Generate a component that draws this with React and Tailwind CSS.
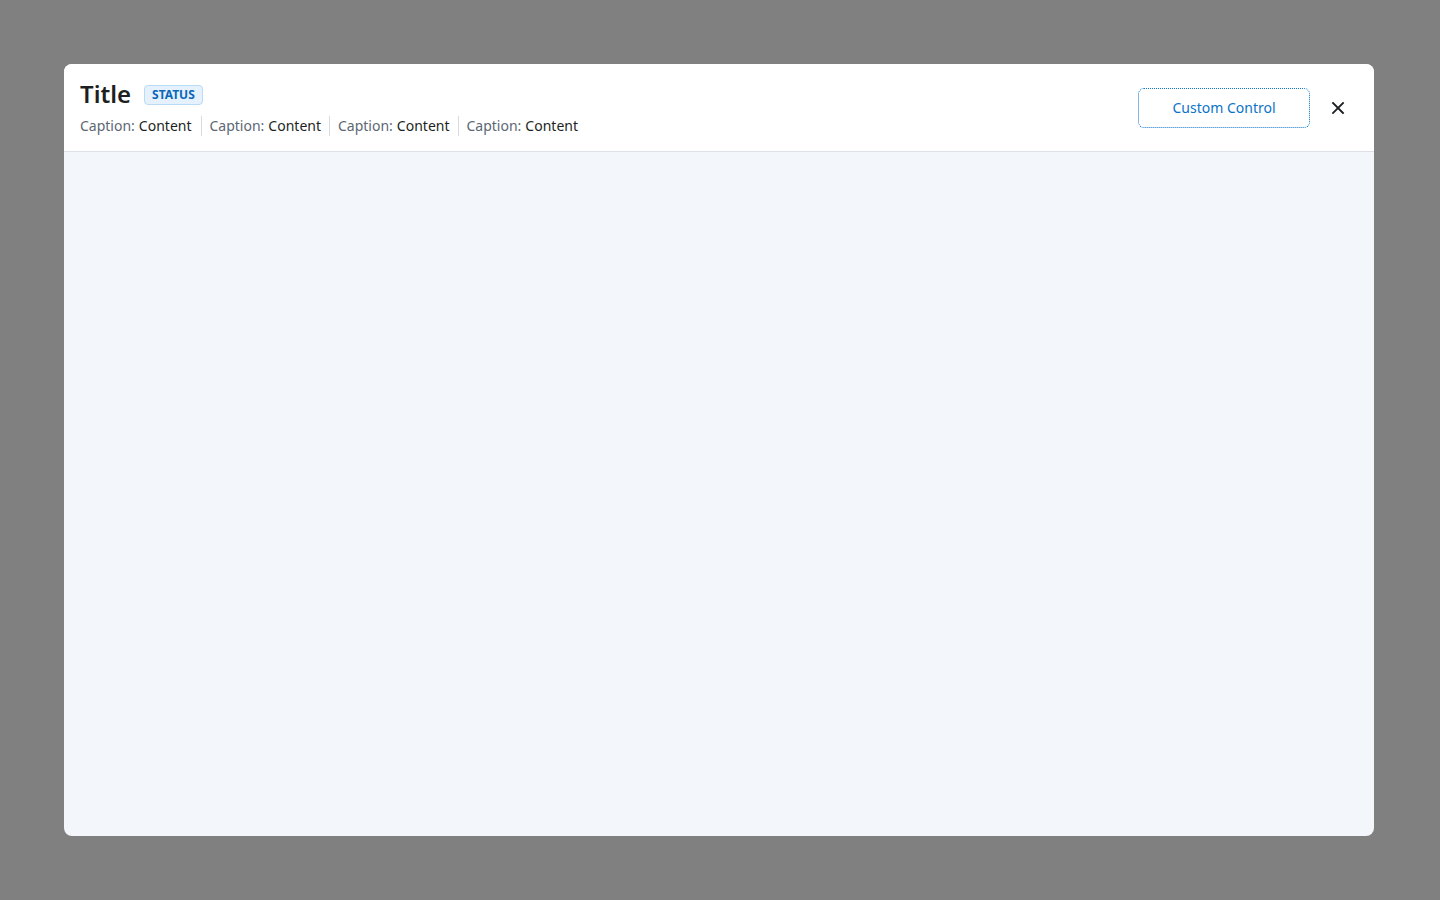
import React from "react";

function Caption({ first }) {
  return (
    <div className={"flex items-center leading-5 " + (first ? "pr-[9px]" : "border-l border-[#d6dbe1] px-2")}>
      <span className="text-[#5c6773]">Caption:</span>
      <span className="ml-1 text-[#1d1f21]">Content</span>
    </div>
  );
}

export default function App() {
  return (
    <div
      className="w-[1440px] h-[900px] bg-[#808080] pt-16 pl-16"
      style={{ fontFamily: '"Noto Sans", "Open Sans", sans-serif' }}
    >
      <div className="w-[1310px] h-[772px] bg-[#f3f6fa] rounded-lg overflow-hidden flex flex-col">
        <div className="bg-white border-b border-[#dde1e6] pt-4 pb-[15px] pl-4 pr-4 flex items-center">
          <div className="flex-1 flex flex-col">
            <div className="flex items-center h-7">
              <h1 className="text-2xl leading-7 font-semibold text-[#1d1f21]">Title</h1>
              <span className="ml-[13px] mt-[1px] h-5 px-[7px] flex items-center rounded-[4px] bg-[#e5f1fc] border border-[#b9dbf6] text-[#0a67b8] text-[12px] font-bold leading-none pt-[1px]">
                STATUS
              </span>
            </div>
            <div className="mt-2 flex items-center text-sm h-5">
              <Caption first />
              <Caption />
              <Caption />
              <Caption />
            </div>
          </div>
          <div className="flex items-center gap-2">
            <button className="w-[172px] h-10 rounded-md border border-dotted border-[#0a73c8] text-[#0a73c8] text-sm flex items-center justify-center">
              Custom Control
            </button>
            <button className="w-10 h-10 flex items-center justify-center text-[#1d1f21]">
              <svg width="14" height="14" viewBox="0 0 14 14" fill="none" stroke="currentColor" strokeWidth="1.8" strokeLinecap="square">
                <path d="M2 2L12 12M12 2L2 12" />
              </svg>
            </button>
          </div>
        </div>
        <div className="flex-1" />
      </div>
    </div>
  );
}
